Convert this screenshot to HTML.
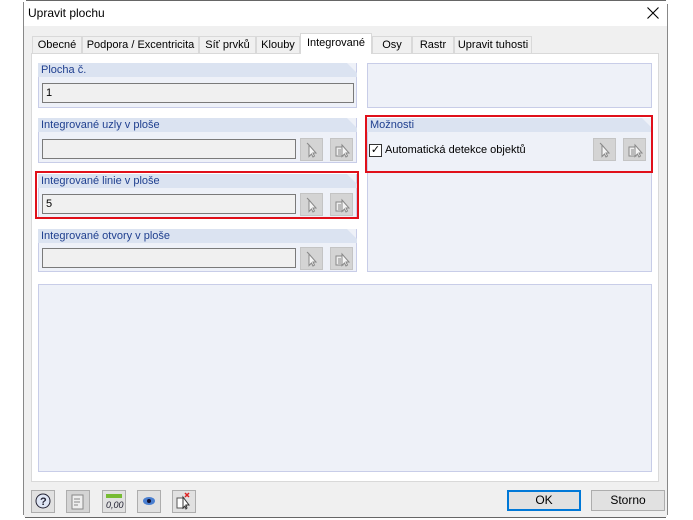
<!DOCTYPE html><html><head><meta charset="utf-8"><style>
*{box-sizing:border-box;margin:0;padding:0}
body{width:693px;height:520px;background:#fff;position:relative;font-family:"Liberation Sans",Arial,sans-serif;font-size:11px;color:#000;overflow:hidden}
.a{position:absolute}
.grp{position:absolute;background:#eef1f8;border:1px solid #c8cde8;border-top:none}
.hd{position:absolute;left:-1px;right:-1px;top:0;height:14px;background:#dbe3f1;color:#1f3f8f;padding-left:3px;line-height:14px;font-size:11px;clip-path:polygon(0 0,calc(100% - 10px) 0,100% 10px,100% 100%,0 100%)}
.in{position:absolute;height:20px;background:#f0f0f0;border:1px solid #7a7a7a;padding-left:3px;line-height:18px}
.pb{position:absolute;width:23px;height:23px;background:#d4d4d4;border:1px solid #c4c4c4}
.pb svg{position:absolute;left:4px;top:3px}
.red{position:absolute;border:2px solid #e0101a}
.tab{position:absolute;top:36px;height:18px;background:#f0f0f0;border:1px solid #d9d9d9;line-height:16px;text-align:center}
.ib{position:absolute;top:490px;width:24px;height:23px;background:#e1e1e1;border:1px solid #adadad}
.btn{position:absolute;top:490px;height:21px;background:#e1e1e1;border:1px solid #adadad;text-align:center;line-height:19px;font-size:12px}
</style></head><body>
<div class="a" style="left:26px;top:0;width:640px;height:1px;background:#666"></div>
<div class="a" style="left:23px;top:2px;width:1px;height:513px;background:#888"></div>
<div class="a" style="left:667px;top:4px;width:1px;height:511px;background:#888"></div>
<div class="a" style="left:24px;top:1px;width:643px;height:25px;background:#fff"></div>
<div class="a" style="left:28px;top:6px;font-size:12px">Upravit plochu</div>
<svg class="a" style="left:647px;top:7px" width="12" height="12"><path d="M0.5 0.5L11.5 11.5M11.5 0.5L0.5 11.5" stroke="#000" stroke-width="1.1"/></svg>
<div class="a" style="left:24px;top:26px;width:643px;height:491px;background:#f0f0f0"></div>
<div class="a" style="left:25px;top:517px;width:641px;height:1px;background:#666"></div>
<div class="a" style="left:31px;top:53px;width:628px;height:429px;background:#fff;border:1px solid #d9d9d9"></div>
<div class="tab" style="left:32px;width:50px">Obecné</div>
<div class="tab" style="left:82px;width:117px">Podpora / Excentricita</div>
<div class="tab" style="left:199px;width:57px">Síť prvků</div>
<div class="tab" style="left:256px;width:44px">Klouby</div>
<div class="tab" style="left:300px;top:33px;height:21px;width:72px;background:#fff;border-bottom:none;line-height:18px">Integrované</div>
<div class="tab" style="left:372px;width:40px">Osy</div>
<div class="tab" style="left:412px;width:42px">Rastr</div>
<div class="tab" style="left:454px;width:78px">Upravit tuhosti</div>

<div class="grp" style="left:38px;top:63px;width:319px;height:45px"><div class="hd">Plocha č.</div></div>
<div class="in" style="left:42px;top:83px;width:312px">1</div>

<div class="grp" style="left:38px;top:118px;width:319px;height:45px"><div class="hd">Integrované uzly v ploše</div></div>
<div class="in" style="left:42px;top:139px;width:254px"></div>

<div class="grp" style="left:38px;top:174px;width:319px;height:45px"><div class="hd">Integrované linie v ploše</div></div>
<div class="in" style="left:42px;top:194px;width:254px">5</div>

<div class="grp" style="left:38px;top:229px;width:319px;height:43px"><div class="hd">Integrované otvory v ploše</div></div>
<div class="in" style="left:42px;top:248px;width:254px"></div>

<div class="grp" style="left:367px;top:63px;width:285px;height:45px;border-top:1px solid #c8cde8"></div>
<div class="grp" style="left:367px;top:118px;width:285px;height:154px"><div class="hd">Možnosti</div></div>
<div class="a" style="left:369px;top:144px;width:13px;height:13px;border:1px solid #333;background:#fff;font-size:11px;line-height:11px;text-align:center">✓</div>
<div class="a" style="left:385px;top:144px;font-size:11px">Automatická detekce objektů</div>

<div class="grp" style="left:38px;top:284px;width:614px;height:188px;border-top:1px solid #c8cde8"></div>

<div class="pb" style="left:300px;top:138px"><svg width="14" height="16"><path d="M2 1l2 2 M4 3l7 8-3 0 1.5 3-1.5 1-1.5-3-2.5 2.5z" fill="#f4f4f4" stroke="#888"/></svg></div>
<div class="pb" style="left:330px;top:138px"><svg width="16" height="16"><rect x="1" y="5" width="7" height="9" fill="#eee" stroke="#888"/><path d="M3 8h3M3 10h3M3 12h3" stroke="#888"/><path d="M7 3l7 8-3 0 1.5 3-1.5 1-1.5-3-2.5 2.5z" fill="#f4f4f4" stroke="#888"/></svg></div>
<div class="pb" style="left:300px;top:193px"><svg width="14" height="16"><path d="M2 1l2 2 M4 3l7 8-3 0 1.5 3-1.5 1-1.5-3-2.5 2.5z" fill="#f4f4f4" stroke="#888"/></svg></div>
<div class="pb" style="left:330px;top:193px"><svg width="16" height="16"><rect x="1" y="5" width="7" height="9" fill="#eee" stroke="#888"/><path d="M3 8h3M3 10h3M3 12h3" stroke="#888"/><path d="M7 3l7 8-3 0 1.5 3-1.5 1-1.5-3-2.5 2.5z" fill="#f4f4f4" stroke="#888"/></svg></div>
<div class="pb" style="left:300px;top:247px"><svg width="14" height="16"><path d="M2 1l2 2 M4 3l7 8-3 0 1.5 3-1.5 1-1.5-3-2.5 2.5z" fill="#f4f4f4" stroke="#888"/></svg></div>
<div class="pb" style="left:330px;top:247px"><svg width="16" height="16"><rect x="1" y="5" width="7" height="9" fill="#eee" stroke="#888"/><path d="M3 8h3M3 10h3M3 12h3" stroke="#888"/><path d="M7 3l7 8-3 0 1.5 3-1.5 1-1.5-3-2.5 2.5z" fill="#f4f4f4" stroke="#888"/></svg></div>
<div class="pb" style="left:593px;top:138px"><svg width="14" height="16"><path d="M2 1l2 2 M4 3l7 8-3 0 1.5 3-1.5 1-1.5-3-2.5 2.5z" fill="#f4f4f4" stroke="#888"/></svg></div>
<div class="pb" style="left:623px;top:138px"><svg width="16" height="16"><rect x="1" y="5" width="7" height="9" fill="#eee" stroke="#888"/><path d="M3 8h3M3 10h3M3 12h3" stroke="#888"/><path d="M7 3l7 8-3 0 1.5 3-1.5 1-1.5-3-2.5 2.5z" fill="#f4f4f4" stroke="#888"/></svg></div>

<div class="red" style="left:35px;top:171px;width:324px;height:48px"></div>
<div class="red" style="left:365px;top:115px;width:288px;height:58px"></div>

<div class="ib" style="left:31px"><svg width="22" height="21"><circle cx="11" cy="10" r="7" fill="#dfe6f5" stroke="#223"/><text x="8" y="14" font-size="11" font-weight="bold" fill="#223">?</text></svg></div>
<div class="ib" style="left:66px;background:#d4d4d4"><svg width="22" height="21"><rect x="5" y="4" width="11" height="14" fill="#eee" stroke="#888"/><path d="M7 8h6M7 11h6M7 14h4" stroke="#888"/></svg></div>
<div class="ib" style="left:102px"><svg width="22" height="21"><rect x="3" y="3" width="16" height="4" fill="#7b3"/><text x="3" y="17" font-size="9" font-style="italic" fill="#223">0,00</text></svg></div>
<div class="ib" style="left:137px"><svg width="22" height="21"><ellipse cx="11" cy="10" rx="6" ry="4" fill="#4a7fd0"/><circle cx="11" cy="10" r="2" fill="#113"/></svg></div>
<div class="ib" style="left:172px"><svg width="22" height="21"><rect x="4" y="7" width="7" height="10" fill="#fff" stroke="#555"/><path d="M10 6l6 8-3 0 1 3-1 1-1-3-2 2z" fill="#fff" stroke="#333"/><path d="M12 2l4 4M16 2l-4 4" stroke="#d22" stroke-width="1.5"/></svg></div>
<div class="btn" style="left:507px;width:74px;border:2px solid #0078d7;line-height:17px">OK</div>
<div class="btn" style="left:591px;width:74px">Storno</div>
</body></html>
